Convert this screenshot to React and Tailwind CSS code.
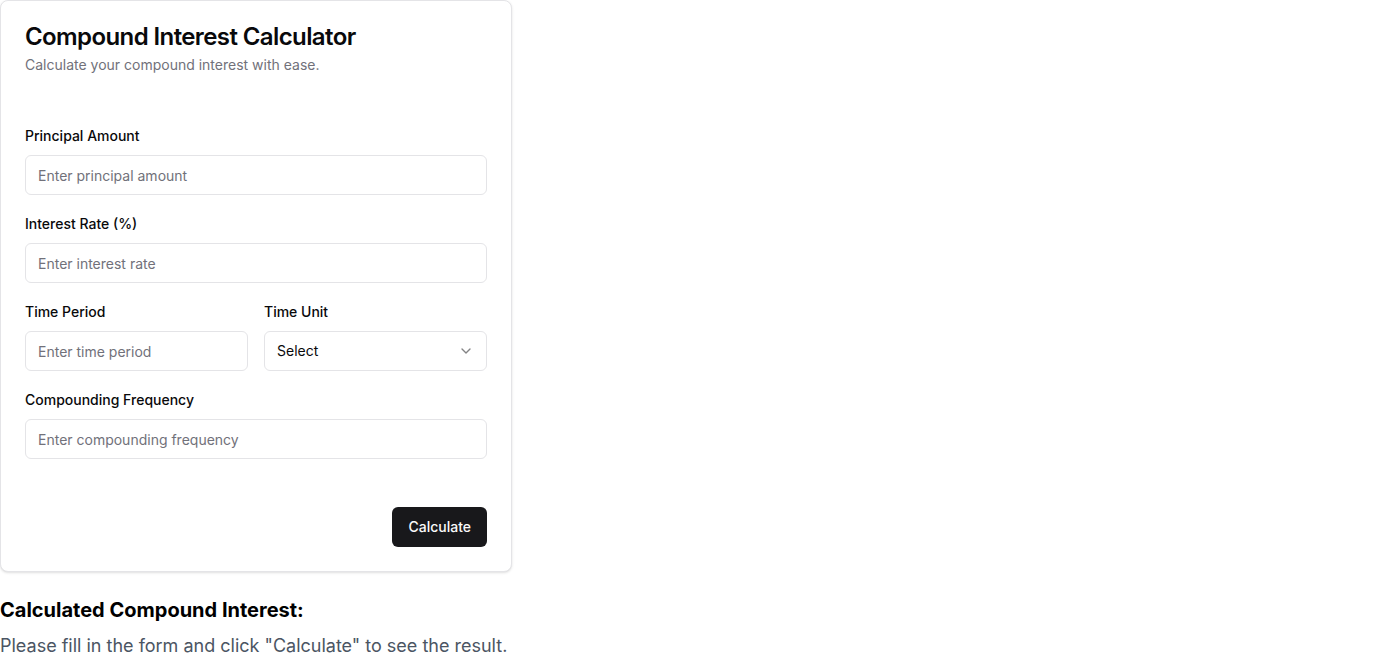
import React from "react";
import { ChevronDown } from "lucide-react";

// shadcn-style card form: compound interest calculator

const Field = ({ label, placeholder }) => (
  <div className="flex flex-col">
    <label className="text-sm font-medium leading-none text-[#09090b]">{label}</label>
    <input
      type="text"
      placeholder={placeholder}
      className="mt-3 h-10 w-full rounded-md border border-[#e4e4e7] bg-white px-3 py-2 text-sm text-[#09090b] placeholder:text-[#71717a] outline-none"
    />
  </div>
);

export default function App() {
  return (
    <div className="min-h-screen bg-white" style={{ fontFamily: "Inter, 'Liberation Sans', sans-serif" }}>
      <div className="w-[512px] rounded-lg border border-[#e4e4e7] bg-white text-[#09090b] shadow-sm">
        <div className="flex flex-col p-6">
          <h1 className="text-2xl font-semibold leading-none tracking-tight">Compound Interest Calculator</h1>
          <p className="mt-1.5 text-sm text-[#71717a]">Calculate your compound interest with ease.</p>
        </div>
        <div className="flex flex-col gap-[22px] px-6 pt-[30px]">
          <Field label="Principal Amount" placeholder="Enter principal amount" />
          <Field label="Interest Rate (%)" placeholder="Enter interest rate" />
          <div className="grid grid-cols-2 gap-4">
            <Field label="Time Period" placeholder="Enter time period" />
            <div className="flex flex-col">
              <label className="text-sm font-medium leading-none">Time Unit</label>
              <button
                type="button"
                className="mt-3 flex h-10 w-full items-center justify-between rounded-md border border-[#e4e4e7] bg-white px-3 py-2 text-sm text-[#09090b]"
              >
                <span>Select</span>
                <ChevronDown className="h-4 w-4 opacity-50" />
              </button>
            </div>
          </div>
          <Field label="Compounding Frequency" placeholder="Enter compounding frequency" />
        </div>
        <div className="flex justify-end p-6 pt-12">
          <button className="h-10 rounded-md bg-[#18181b] px-4 text-sm font-medium text-[#fafafa]">Calculate</button>
        </div>
      </div>
      <h2 className="mt-6 text-xl font-bold text-black">Calculated Compound Interest:</h2>
      <p className="mt-2 text-lg text-[#4b5563]">Please fill in the form and click "Calculate" to see the result.</p>
    </div>
  );
}
